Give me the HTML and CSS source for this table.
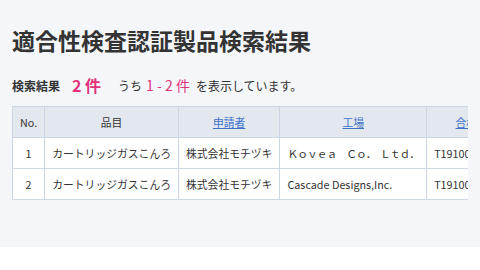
FILE: index.html
```html
<!DOCTYPE html>
<html lang="ja">
<head>
<meta charset="utf-8">
<title>適合性検査認証製品検索結果</title>
<link rel="stylesheet" href="styles.css">
</head>
<body>
<main class="page">
  <h1 class="title">適合性検査認証製品検索結果</h1>
  <p class="summary">
    <span class="label">検索結果</span>
    <span class="count">2 件</span>
    <span class="text uchi">うち</span>
    <span class="range">1 - 2 件</span>
    <span class="text">を表示しています。</span>
  </p>
  <div class="table-wrap">
    <table class="results">
      <thead>
        <tr>
          <th>No.</th>
          <th>品目</th>
          <th><a href="#">申請者</a></th>
          <th><a href="#">工場</a></th>
          <th class="last"><a href="#">合格番号</a></th>
        </tr>
      </thead>
      <tbody>
        <tr>
          <td class="num">1</td>
          <td>カートリッジガスこんろ</td>
          <td>株式会社モチヅキ</td>
          <td class="wide">Ｋｏｖｅａ　Ｃｏ．　Ｌｔｄ．</td>
          <td>T19100001</td>
        </tr>
        <tr>
          <td class="num">2</td>
          <td>カートリッジガスこんろ</td>
          <td>株式会社モチヅキ</td>
          <td>Cascade Designs,Inc.</td>
          <td>T19100002</td>
        </tr>
      </tbody>
    </table>
  </div>
</main>
</body>
</html>
```

FILE: styles.css
```css
html, body {
  margin: 0;
  padding: 0;
  background: #ffffff;
}

body {
  font-family: "Noto Sans CJK JP", "Noto Sans", sans-serif;
  color: #333333;
}

.page {
  background: #f5f6fa;
  padding: 25px 12px 47px;
}

.title {
  margin: 0;
  font-size: 23px;
  line-height: 31px;
  font-weight: 700;
  color: #333333;
}

.summary {
  margin: 18px 0 10px;
  height: 22px;
  display: flex;
  align-items: center;
  font-size: 12px;
  white-space: nowrap;
}

.label {
  font-weight: 700;
  margin-right: 12px;
}

.count {
  color: #e0337a;
  font-size: 16px;
  font-weight: 700;
  margin-right: 17px;
}

.uchi {
  margin-right: 3px;
}

.range {
  color: #e0337a;
  font-size: 14px;
  margin: 0 6px 0 1px;
}

.table-wrap {
  width: 456px;
  overflow: hidden;
}

.results {
  border-collapse: collapse;
  white-space: nowrap;
  font-size: 10.8px;
  background: #ffffff;
}

.results th,
.results td {
  border: 1px solid #ccd6e4;
  height: 30px;
  padding: 0 7px;
}

.results th {
  background: #e3e8ef;
  font-weight: 400;
  color: #333333;
  text-align: center;
}

.results th.last {
  min-width: 86px;
}

.results th a {
  color: #3d72c8;
  text-decoration: underline;
}

.results td {
  text-align: left;
}

.results td.num {
  text-align: center;
}

.results td.wide {
  letter-spacing: -1px;
}
```
